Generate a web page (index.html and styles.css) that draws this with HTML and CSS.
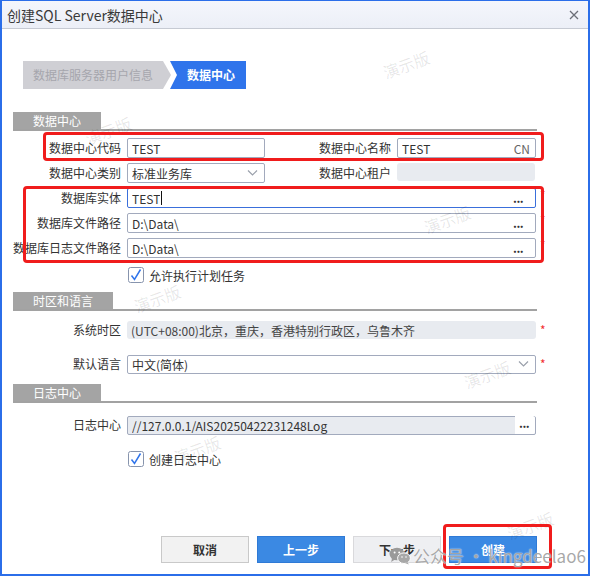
FILE: index.html
```html
<!DOCTYPE html>
<html lang="zh-CN">
<head>
  <meta charset="UTF-8" />
  <title>创建SQL Server数据中心</title>
  <link rel="stylesheet" href="styles.css">
</head>
<body>
  <div class="dialog">
    <div class="titlebar">
      <span class="title">创建SQL Server数据中心</span>
      <svg class="close" width="10" height="10" viewBox="0 0 10 10">
        <path d="M1 1L9 9M9 1L1 9" stroke="#6b6f78" stroke-width="1.3" fill="none"/>
      </svg>
    </div>

    <div class="content">
      <div class="steps">
        <div class="step step-done">数据库服务器用户信息</div>
        <div class="step step-active">数据中心</div>
      </div>

      <!-- 数据中心 -->
      <div class="section-head section-first"><span>数据中心</span></div>
      <div class="form-grid">
        <label class="lbl">数据中心代码</label>
        <div class="field"><span class="val">TEST</span></div>
        <label class="lbl">数据中心名称</label>
        <div class="field"><span class="val">TEST</span><span class="suffix">CN</span></div>
        <span></span>

        <label class="lbl">数据中心类别</label>
        <div class="field"><span class="val">标准业务库</span>
          <svg class="chev" width="11" height="6" viewBox="0 0 11 6"><path d="M1 0.5L5.5 5L10 0.5" stroke="#9aa0ab" stroke-width="1.2" fill="none"/></svg>
        </div>
        <label class="lbl">数据中心租户</label>
        <div class="field field-off field-short"></div>
        <span></span>

        <label class="lbl">数据库实体</label>
        <div class="field field-wide field-focus"><span class="val">TEST</span><span class="caret"></span><span class="more">...</span></div>
        <span class="req">*</span>

        <label class="lbl">数据库文件路径</label>
        <div class="field field-wide"><span class="val">D:\Data\</span><span class="more">...</span></div>
        <span class="req">*</span>

        <label class="lbl">数据库日志文件路径</label>
        <div class="field field-wide"><span class="val">D:\Data\</span><span class="more">...</span></div>
        <span class="req">*</span>
      </div>
      <div class="check check-first">
        <svg class="box" width="16" height="16" viewBox="0 0 16 16">
          <rect x="0.5" y="0.5" width="15" height="15" rx="2" fill="#fff" stroke="#8794ad"/>
          <path d="M3.5 8.5L6.5 12.5L12.5 2.5" stroke="#2f74eb" stroke-width="1.5" fill="none"/>
        </svg>
        <span>允许执行计划任务</span>
      </div>

      <!-- 时区和语言 -->
      <div class="section-head"><span>时区和语言</span></div>
      <div class="row row-tz">
        <label class="lbl">系统时区</label>
        <div class="field field-off"><span class="val">(UTC+08:00)北京，重庆，香港特别行政区，乌鲁木齐</span></div>
        <span class="req">*</span>
      </div>
      <div class="row row-lang">
        <label class="lbl">默认语言</label>
        <div class="field"><span class="val">中文(简体)</span>
          <svg class="chev" width="11" height="6" viewBox="0 0 11 6"><path d="M1 0.5L5.5 5L10 0.5" stroke="#9aa0ab" stroke-width="1.2" fill="none"/></svg>
        </div>
        <span class="req">*</span>
      </div>

      <!-- 日志中心 -->
      <div class="section-head section-log"><span>日志中心</span></div>
      <div class="row row-log">
        <label class="lbl">日志中心</label>
        <div class="field field-grey"><span class="val">//127.0.0.1/AIS20250422231248Log</span><span class="more more-btn">...</span></div>
        <span></span>
      </div>
      <div class="check check-log">
        <svg class="box" width="16" height="16" viewBox="0 0 16 16">
          <rect x="0.5" y="0.5" width="15" height="15" rx="2" fill="#fff" stroke="#8794ad"/>
          <path d="M3.5 8.5L6.5 12.5L12.5 2.5" stroke="#2f74eb" stroke-width="1.5" fill="none"/>
        </svg>
        <span>创建日志中心</span>
      </div>

      <div class="actions">
        <button class="btn btn-plain">取消</button>
        <button class="btn btn-blue">上一步</button>
        <button class="btn btn-off">下一步</button>
        <button class="btn btn-blue">创建</button>
      </div>
    </div>
  </div>

  <!-- trial marks -->
  <span class="mark" style="left:382px;top:52px">演示版</span>
  <span class="mark" style="left:84px;top:118px">演示版</span>
  <span class="mark" style="left:423px;top:207px">演示版</span>
  <span class="mark" style="left:133px;top:286px">演示版</span>
  <span class="mark" style="left:463px;top:362px">演示版</span>
  <span class="mark" style="left:173px;top:437px">演示版</span>
  <span class="mark" style="left:506px;top:513px">演示版</span>

  <!-- highlight frames -->
  <div class="hl" style="left:43px;top:132px;width:501px;height:29px"></div>
  <div class="hl" style="left:23px;top:186px;width:521px;height:77px"></div>
  <div class="hl" style="left:443px;top:524px;width:109px;height:45px"></div>

  <div class="sign">
    <svg width="22" height="18" viewBox="0 0 22 18">
      <ellipse cx="8" cy="7" rx="7.5" ry="6.3" fill="#9a9a9a"/>
      <path d="M3 11.5L2.2 15L6 12.6Z" fill="#9a9a9a"/>
      <ellipse cx="15" cy="11.2" rx="6.4" ry="5.3" fill="#a8a8a8" stroke="#fff" stroke-width="1"/>
      <path d="M18.5 15L19.8 17.6L16 16Z" fill="#a8a8a8"/>
      <circle cx="5.6" cy="5.4" r="1" fill="#fff"/>
      <circle cx="10.2" cy="5.4" r="1" fill="#fff"/>
      <circle cx="13" cy="10" r="0.8" fill="#fff"/>
      <circle cx="17" cy="10" r="0.8" fill="#fff"/>
    </svg>
    <span>公众号 · kingdeelao6</span>
  </div>
</body>
</html>
```

FILE: styles.css
```css
* {
  margin: 0;
  padding: 0;
  box-sizing: border-box;
}

body {
  position: relative;
  width: 592px;
  height: 577px;
  background: #fff;
  font-family: "Noto Sans CJK SC", "Microsoft YaHei", sans-serif;
  font-size: 12px;
  color: #333;
  overflow: hidden;
}

.dialog {
  width: 590px;
  height: 576px;
  border: 2px solid #2b6ee9;
  border-top-width: 1px;
  background: #fff;
}

/* title bar */
.titlebar {
  height: 28px;
  display: flex;
  align-items: center;
  justify-content: space-between;
  padding: 0 9px 0 5px;
  background: linear-gradient(#f4f6fc, #eceff7);
  border-bottom: 1px solid #c6cad3;
}

.title {
  font-size: 14px;
  color: #3a3a3a;
}

/* body */
.content {
  padding-left: 11px;
  width: 586px;
}

.steps {
  display: flex;
  margin: 32px 0 0 10px;
  height: 28px;
}

.step {
  height: 28px;
  line-height: 28px;
  font-size: 12px;
}

.step-done {
  width: 148px;
  padding-left: 10px;
  background: #cfcfd4;
  color: #a6a6ad;
  clip-path: polygon(0 0, 140px 0, 148px 50%, 140px 100%, 0 100%);
}

.step-active {
  width: 76px;
  margin-left: -1px;
  padding-left: 17px;
  background: #2f74eb;
  color: #fff;
  font-weight: bold;
  clip-path: polygon(0 0, 100% 0, 100% 100%, 0 100%, 7px 50%);
}

/* section headers */
.section-head {
  width: 524px;
  height: 19px;
  margin-top: 9px;
  border-bottom: 2px solid #a2a2a2;
}

.section-first {
  margin-top: 23px;
}

.section-log {
  margin-top: 11px;
}

.section-head span {
  display: inline-block;
  height: 17px;
  line-height: 17px;
  padding: 0 20px;
  background: #a4a4a4;
  color: #fff;
}

/* fields */
.form-grid {
  display: grid;
  grid-template-columns: 114px 138px 132px 139px 12px;
  grid-auto-rows: 20px;
  row-gap: 5px;
  margin-top: 7px;
}

.lbl {
  text-align: right;
  padding-right: 6px;
  line-height: 20px;
  white-space: nowrap;
  color: #333;
}

.field {
  display: flex;
  align-items: center;
  height: 20px;
  padding: 0 4px;
  border: 1px solid #a2aabd;
  border-radius: 2px;
  background: #fff;
  color: #333;
}

.field .val {
  flex: 1;
  white-space: nowrap;
  overflow: hidden;
}

.field-wide {
  grid-column: 2 / 5;
}

.field-focus {
  border-color: #3a6fdb;
}

.field-focus .val {
  flex: none;
}

.caret {
  width: 1px;
  height: 14px;
  background: #111;
  margin-left: 1px;
  margin-right: auto;
}

.field-off {
  border: none;
  border-radius: 3px;
  background: #e8ebf0;
}

.field-short {
  height: 18px;
  width: 138px;
}

.field-grey {
  background: #e8ebf0;
  padding-right: 0;
}

.suffix {
  color: #666;
  padding-right: 1px;
}

.chev {
  margin-right: 2px;
}

.more {
  width: 16px;
  font-weight: bold;
  line-height: 12px;
  color: #333;
  letter-spacing: -0.5px;
  margin-right: 2px;
}

.more-btn {
  width: 20px;
  height: 18px;
  line-height: 14px;
  margin-right: 0;
  padding-left: 4px;
  background: #fff;
  border-radius: 0 2px 2px 0;
}

.req {
  color: #f23030;
  padding-left: 4px;
  line-height: 14px;
}

/* single field rows */
.row {
  display: grid;
  grid-template-columns: 114px 409px 12px;
  align-items: center;
}

.row-tz {
  margin-top: 9px;
  height: 18px;
}

.row-tz .field {
  height: 18px;
  color: #444;
}

.row-lang {
  margin-top: 16px;
  height: 19px;
}

.row-lang .field,
.row-log .field {
  height: 19px;
}

.row-log {
  margin-top: 12px;
  height: 19px;
}

/* checkboxes */
.check {
  display: flex;
  align-items: center;
  gap: 5px;
  height: 16px;
  margin-left: 115px;
}

.check-first {
  margin-top: 9px;
}

.check-log {
  margin-top: 17px;
}

/* buttons */
.actions {
  display: flex;
  justify-content: flex-end;
  gap: 8px;
  width: 524px;
  margin-top: 69px;
}

.btn {
  width: 88px;
  height: 27px;
  font-family: inherit;
  font-size: 12px;
  font-weight: bold;
  border: 1px solid #c9c9c9;
  background: #f2f2f2;
  color: #333;
}

.btn-blue {
  background: #3b89e3;
  border-color: #2f7ad6;
  color: #fff;
}

.btn-off {
  background: #eeeff2;
  border-color: #d9d9dc;
  color: #333;
}

/* overlays */
.mark {
  position: absolute;
  width: 50px;
  font-size: 16px;
  color: rgba(0, 0, 0, 0.1);
  transform: rotate(-20deg);
  pointer-events: none;
  white-space: nowrap;
}

.hl {
  position: absolute;
  border: 3px solid #f01c1c;
  border-radius: 4px;
  pointer-events: none;
}

.sign {
  position: absolute;
  left: 389px;
  top: 543px;
  display: flex;
  align-items: center;
  gap: 2px;
  font-size: 17px;
  color: rgba(140, 140, 140, 0.75);
  text-shadow: 0 0 1px rgba(255, 255, 255, 0.9), 0 0 2px rgba(255, 255, 255, 0.6);
  white-space: nowrap;
  pointer-events: none;
}
```
